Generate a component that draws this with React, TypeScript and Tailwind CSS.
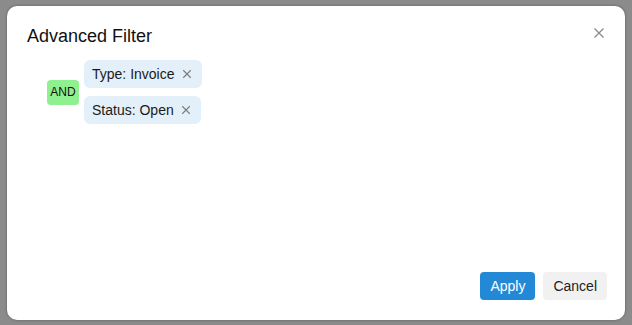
import React from 'react'

function CrossIcon({ className }: { className?: string }) {
  return (
    <svg viewBox="0 0 12 12" className={className} fill="none" stroke="currentColor" strokeWidth="1.3">
      <path d="M1.5 1.5 10.5 10.5M10.5 1.5 1.5 10.5" />
    </svg>
  )
}

function Chip({ label }: { label: string }) {
  return (
    <div className="flex items-center h-[28px] pl-[8px] pr-[10px] rounded-[6px] bg-[#e3f0fa] text-[14px] text-[#1a1a1a]">
      <span>{label}</span>
      <CrossIcon className="ml-[7px] w-[10px] h-[10px] text-[#7a7a7a]" />
    </div>
  )
}

export default function App() {
  return (
    <div className="w-[632px] h-[325px] bg-[#8b8b8b] pl-[7px] pt-[6px] font-['Liberation_Sans',Arial,sans-serif]">
      <div className="w-[618px] h-[314px] bg-white rounded-[10px] shadow-[0_0_3px_rgba(0,0,0,0.35)] flex flex-col pl-[20px] pr-[18px] pt-[18px] pb-[20px]">
        <div className="flex items-start justify-between">
          <h2 className="text-[18px] leading-[24px] text-[#111]">Advanced Filter</h2>
          <button className="mt-[3px] mr-[2px] text-[#8a8a8a]">
            <CrossIcon className="w-[12px] h-[12px]" />
          </button>
        </div>

        <div className="flex items-center gap-[5px] ml-[20px] mt-[12px]">
          <div className="w-[32px] h-[25px] rounded-[4px] bg-[#8ef08e] flex items-center justify-center text-[12px] text-[#111]">
            AND
          </div>
          <div className="flex flex-col gap-[8px]">
            <div className="flex">
              <Chip label="Type: Invoice" />
            </div>
            <div className="flex">
              <Chip label="Status: Open" />
            </div>
          </div>
        </div>

        <div className="mt-auto flex justify-end gap-[8px]">
          <button className="h-[28px] px-[10px] rounded-[4px] bg-[#2389d7] text-white text-[14px]">Apply</button>
          <button className="h-[28px] px-[10px] rounded-[4px] bg-[#f1f1f1] text-[#222] text-[14px]">Cancel</button>
        </div>
      </div>
    </div>
  )
}
